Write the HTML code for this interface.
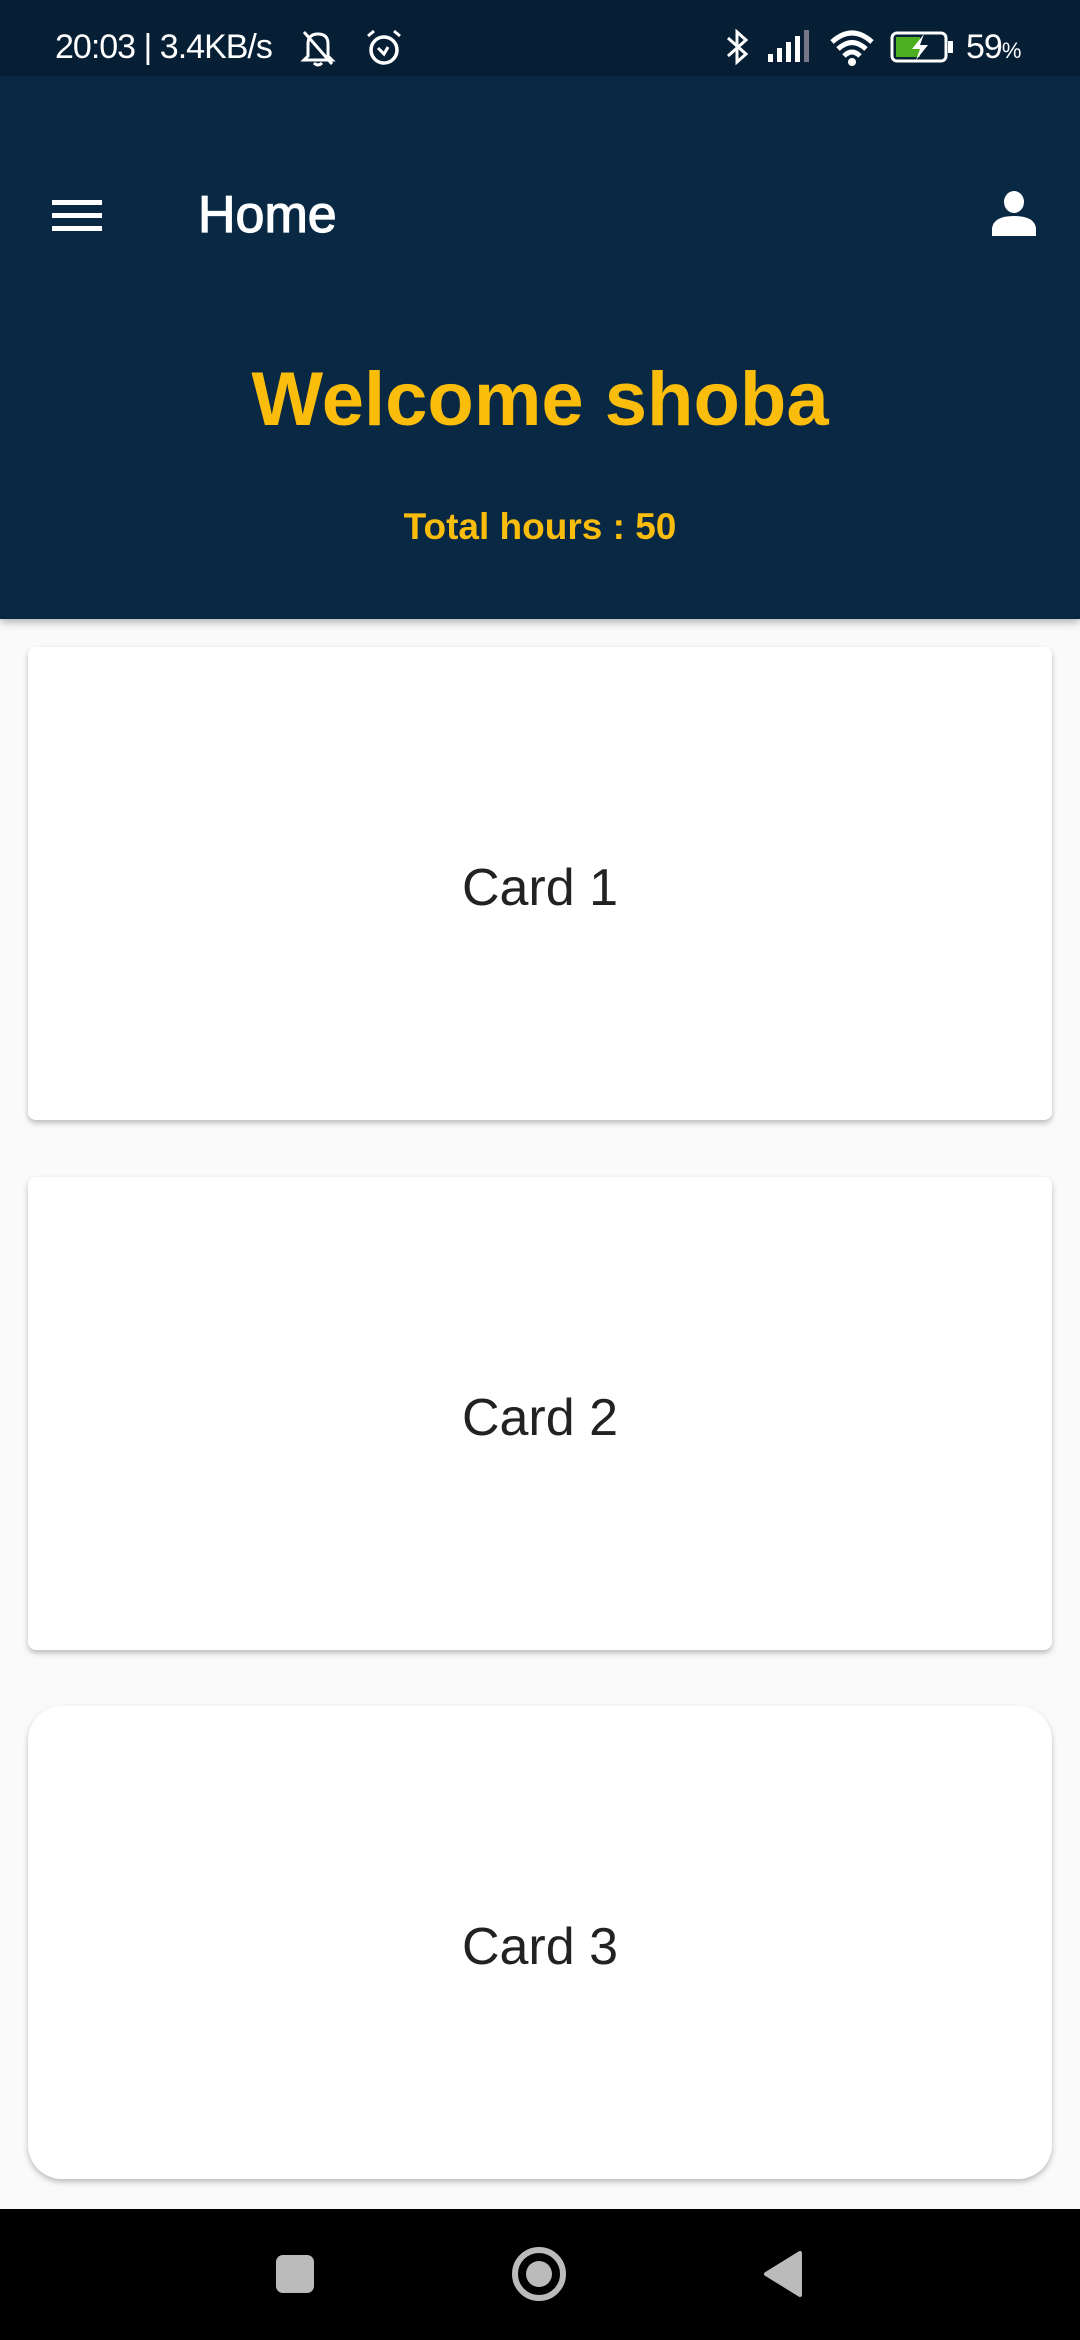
<!DOCTYPE html>
<html><head><meta charset="utf-8"><style>
*{margin:0;padding:0;box-sizing:border-box}
body{width:1080px;height:2340px;background:#fafafa;font-family:"Liberation Sans",sans-serif;position:relative;overflow:hidden}
.sb{position:absolute;left:0;top:0;width:1080px;height:76px;background:#061f35;color:#fff;font-size:34px}
.ab{position:absolute;left:0;top:76px;width:1080px;height:543px;background:#082844;box-shadow:0 3px 8px rgba(0,0,0,.3)}
.card{position:absolute;left:28px;width:1024px;height:473px;background:#fff;border-radius:8px;box-shadow:0 3px 6px rgba(0,0,0,.25);display:flex;align-items:center;justify-content:center;font-size:52px;color:#222;padding-top:8px}
.nav{position:absolute;left:0;top:2209px;width:1080px;height:131px;background:#000}
</style></head><body>
<div class="sb">
 <span style="position:absolute;left:55px;top:28px;font-size:34px;letter-spacing:-1px">20:03 | 3.4KB/s</span>
 <svg style="position:absolute;left:300px;top:28px" width="36" height="40" viewBox="0 0 36 40"><path d="M8 28 L8 16 Q8 6 18 6 Q28 6 28 16 L28 28 L32 32 L4 32 Z M14 35 Q18 39 22 35 M4 4 L32 36" stroke="#fff" stroke-width="3" fill="none"/></svg>
 <svg style="position:absolute;left:364px;top:28px" width="40" height="40" viewBox="0 0 40 40"><circle cx="20" cy="22" r="13" stroke="#fff" stroke-width="3.5" fill="none"/><path d="M14 20 L20 26 L24 19 M4 8 L10 3 M36 8 L30 3" stroke="#fff" stroke-width="3" fill="none"/></svg>
 <svg style="position:absolute;left:720px;top:26px" width="34" height="42" viewBox="0 0 34 42"><path d="M8 12 L26 28 L17 36 L17 6 L26 14 L8 30" stroke="#fff" stroke-width="3" fill="none"/></svg>
 <svg style="position:absolute;left:766px;top:30px" width="48" height="34" viewBox="0 0 48 34"><rect x="2" y="24" width="5" height="8" fill="#fff"/><rect x="11" y="18" width="5" height="14" fill="#fff"/><rect x="20" y="12" width="5" height="20" fill="#fff"/><rect x="29" y="6" width="5" height="26" fill="#fff"/><rect x="38" y="0" width="5" height="32" fill="#778"/></svg>
 <svg style="position:absolute;left:828px;top:28px" width="48" height="40" viewBox="0 0 48 40"><path d="M4 14 Q24 -4 44 14 M10 21 Q24 8 38 21 M16 28 Q24 20 32 28" stroke="#fff" stroke-width="5" fill="none"/><circle cx="24" cy="34" r="4" fill="#fff"/></svg>
 <svg style="position:absolute;left:890px;top:30px" width="66" height="34" viewBox="0 0 66 34"><rect x="2" y="3" width="54" height="28" rx="5" stroke="#fff" stroke-width="3" fill="none"/><rect x="6" y="7" width="24" height="20" fill="#4caf1f"/><rect x="58" y="11" width="5" height="12" fill="#fff"/><path d="M34 4 L22 19 L30 19 L26 30 L38 15 L30 15 Z" fill="#fff"/></svg>
 <span style="position:absolute;left:966px;top:28px;font-size:34px;letter-spacing:-1px">59<span style="font-size:22px">%</span></span>
</div>
<div class="ab">
 <div style="position:absolute;left:52px;top:124px;width:50px;height:5px;background:#fff"></div>
 <div style="position:absolute;left:52px;top:137px;width:50px;height:5px;background:#fff"></div>
 <div style="position:absolute;left:52px;top:150px;width:50px;height:5px;background:#fff"></div>
 <div style="position:absolute;left:198px;top:109px;font-size:52px;color:#fff;-webkit-text-stroke:1.2px #fff">Home</div>
 <svg style="position:absolute;left:990px;top:114px" width="48" height="46" viewBox="0 0 48 46"><ellipse cx="24" cy="12" rx="10" ry="11" fill="#fff"/><path d="M2 46 L2 38 Q4 26 24 26 Q44 26 46 38 L46 46 Z" fill="#fff"/></svg>
 <div style="position:absolute;left:0;width:1080px;top:280px;text-align:center;font-size:76px;font-weight:bold;color:#fbbd0c">Welcome shoba</div>
 <div style="position:absolute;left:0;width:1080px;top:430px;text-align:center;font-size:37px;font-weight:bold;color:#fbbd0c">Total hours : 50</div>
</div>
<div class="card" style="top:647px">Card 1</div>
<div class="card" style="top:1177px">Card 2</div>
<div class="card" style="top:1706px;border-radius:34px">Card 3</div>
<div class="nav">
 <div style="position:absolute;left:276px;top:46px;width:38px;height:38px;border-radius:7px;background:#bbb"></div>
 <div style="position:absolute;left:512px;top:38px;width:54px;height:54px;border-radius:50%;border:6px solid #bbb"></div>
 <div style="position:absolute;left:526px;top:52px;width:26px;height:26px;border-radius:50%;background:#bbb"></div>
 <svg style="position:absolute;left:762px;top:41px" width="42" height="48" viewBox="0 0 42 48"><path d="M38 3 L38 45 L4 24 Z" fill="#bbb" stroke="#bbb" stroke-width="4" stroke-linejoin="round"/></svg>
</div>
</body></html>
